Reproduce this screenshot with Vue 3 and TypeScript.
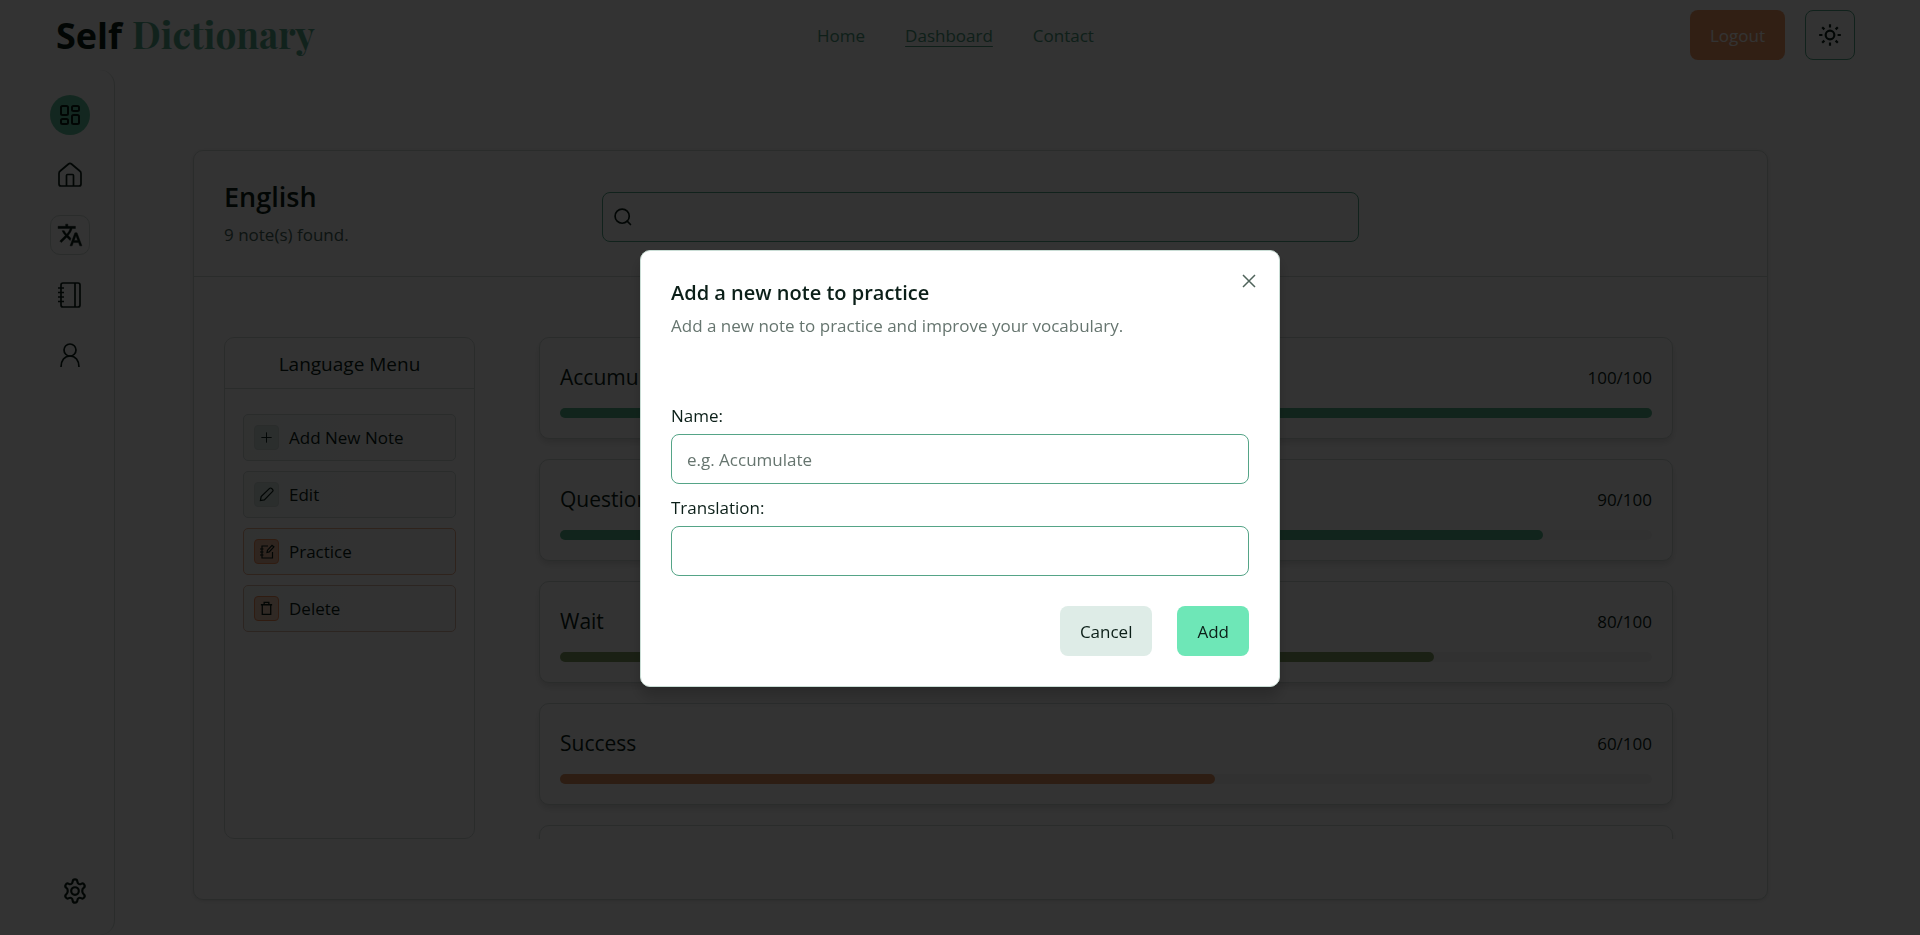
<script setup lang="ts">
import { ref } from 'vue'

interface Note {
  name: string
  score: number
  tone: 'high' | 'good' | 'fair'
}

interface MenuAction {
  label: string
  icon: 'plus' | 'pencil' | 'notebook' | 'trash'
}

const notes: Note[] = [
  { name: 'Accumulate', score: 100, tone: 'high' },
  { name: 'Question', score: 90, tone: 'high' },
  { name: 'Wait', score: 80, tone: 'good' },
  { name: 'Success', score: 60, tone: 'fair' },
]

const actions: MenuAction[] = [
  { label: 'Add New Note', icon: 'plus' },
  { label: 'Edit', icon: 'pencil' },
  { label: 'Practice', icon: 'notebook' },
  { label: 'Delete', icon: 'trash' },
]

const search = ref('')
const noteName = ref('')
const translation = ref('')
</script>

<template>
  <div class="page">
    <header class="topbar">
      <a href="#" class="logo"><span class="logo-self">Self</span><span class="logo-dictionary">Dictionary</span></a>
      <nav class="nav">
        <a href="#">Home</a>
        <a href="#" class="current">Dashboard</a>
        <a href="#">Contact</a>
      </nav>
      <div class="session">
        <button type="button" class="logout">Logout</button>
        <button type="button" class="theme" aria-label="Toggle theme">
          <svg width="26" height="26" viewBox="0 0 24 24" fill="none" stroke="currentColor" stroke-width="2">
            <circle cx="12" cy="12" r="4" />
            <path d="M12 2v3M12 19v3M2 12h3M19 12h3M4.800 4.800l2 2M17.200 17.200l2 2M4.800 19.200l2-2M17.200 6.800l2-2" />
          </svg>
        </button>
      </div>
    </header>

    <div class="workspace">
      <aside class="sidebar">
        <a href="#" class="side-link active" aria-label="Dashboard">
          <svg width="24" height="24" viewBox="0 0 24 24" fill="none" stroke="currentColor" stroke-width="2">
            <rect x="3" y="3" width="7" height="9" rx="1.500" />
            <rect x="14" y="3" width="7" height="5" rx="1.500" />
            <rect x="14" y="12" width="7" height="9" rx="1.500" />
            <rect x="3" y="16" width="7" height="5" rx="1.500" />
          </svg>
        </a>
        <a href="#" class="side-link" aria-label="Home">
          <svg width="26" height="26" viewBox="0 0 26 26" fill="none" stroke="currentColor" stroke-width="1.700" stroke-linejoin="round">
            <path d="M2 22V11.500c0-1 .4-1.900 1.200-2.500l8.300-7c.9-.7 2.100-.7 3 0l8.300 7c.8.6 1.200 1.500 1.200 2.500V22c0 1.200-.8 2-2 2H4c-1.200 0-2-.8-2-2z" />
            <path d="M9.500 24V13.500c0-.6.400-1 1-1h5c.6 0 1 .4 1 1V24" />
          </svg>
        </a>
        <a href="#" class="side-link framed" aria-label="Languages">
          <svg width="26" height="26" viewBox="0 0 24 24" fill="currentColor" stroke="currentColor" stroke-width="0.400">
            <path d="M12.870 15.070l-2.540-2.510.03-.03A17.500 17.500 0 0 0 14.070 6H17V4h-7V2H8v2H1v2h11.170C11.500 7.920 10.440 9.750 9 11.350 8.070 10.320 7.300 9.190 6.690 8h-2c.73 1.630 1.730 3.170 2.980 4.560l-5.090 5.020L4 19l5-5 3.110 3.110.760-2.040zM18.500 10h-2L12 22h2l1.120-3h4.750L21 22h2l-4.500-12zm-2.620 7l1.620-4.330L19.120 17h-3.240z" />
          </svg>
        </a>
        <a href="#" class="side-link" aria-label="Notes">
          <svg width="26" height="26" viewBox="0 0 26 26" fill="none" stroke="currentColor" stroke-width="1.700">
            <rect x="4" y="1" width="19" height="24" rx="2" />
            <path d="M18 1v24M1 6h6M1 10.500h6M1 15h6M1 19.500h6" />
          </svg>
        </a>
        <a href="#" class="side-link" aria-label="Profile">
          <svg width="26" height="26" viewBox="0 0 26 26" fill="none" stroke="currentColor" stroke-width="1.700">
            <circle cx="13" cy="8" r="6" />
            <path d="M4 25c0-6.500 3.500-11 9-11s9 4.500 9 11" />
          </svg>
        </a>
        <a href="#" class="side-link settings" aria-label="Settings">
          <svg width="26" height="26" viewBox="0 0 24 24" fill="none" stroke="currentColor" stroke-width="2" stroke-linejoin="round">
            <circle cx="12" cy="12" r="3.500" />
            <path d="M9.800 3.400c.2-2.900 4.200-2.900 4.400 0 .1 1.900 1.800 2.900 3.500 2 2.500-1.300 4.500 2.100 2.200 3.800-1.600 1.100-1.600 4.500 0 5.600 2.300 1.700.3 5.100-2.200 3.800-1.700-.9-3.400.1-3.500 2-.2 2.900-4.200 2.900-4.400 0-.1-1.900-1.800-2.900-3.500-2-2.500 1.300-4.500-2.100-2.200-3.800 1.600-1.100 1.600-4.500 0-5.600C1.800 7.500 3.800 4.100 6.300 5.400c1.700.9 3.400-.1 3.500-2z" />
          </svg>
        </a>
      </aside>

      <main class="main">
        <section class="card">
          <div class="card-head">
            <div>
              <h1>English</h1>
              <p>9 note(s) found.</p>
            </div>
            <label class="search">
              <svg width="20" height="20" viewBox="0 0 24 24" fill="none" stroke="currentColor" stroke-width="2" stroke-linecap="round">
                <circle cx="11" cy="11" r="8.500" />
                <path d="M21 21l-4-4" />
              </svg>
              <input v-model="search" type="search" aria-label="Search notes" />
            </label>
          </div>

          <div class="card-body">
            <div class="menu">
              <h2>Language Menu</h2>
              <div class="menu-items">
                <button v-for="action in actions" :key="action.icon" type="button" class="menu-item" :class="action.icon">
                  <span class="menu-icon">
                    <svg v-if="action.icon === 'plus'" width="15" height="15" viewBox="0 0 16 16" fill="none" stroke="currentColor">
                      <path d="M8 2.500v11M2.500 8h11" />
                    </svg>
                    <svg v-else-if="action.icon === 'pencil'" width="15" height="15" viewBox="0 0 16 16" fill="none" stroke="currentColor" stroke-width="1.300">
                      <path d="M1.500 14.500l.8-4.200L11 1.700c.8-.8 1.800-.8 2.500-.1l.9.900c.7.700.7 1.700-.1 2.500l-8.600 8.700z" />
                    </svg>
                    <svg v-else-if="action.icon === 'notebook'" width="16" height="16" viewBox="0 0 16 16" fill="none" stroke="currentColor" stroke-width="1.200">
                      <path d="M9 2H3v12h10.500V8M1 5h3.500M1 8h3.500M1 11h3.500M8 8.500l.5-2.300L13 1.300l1.900 1.600-4.700 5z" />
                    </svg>
                    <svg v-else width="15" height="15" viewBox="0 0 16 16" fill="none" stroke="currentColor" stroke-width="1.400">
                      <path d="M2 4h12M3.500 4v10.300h9V4M5.500 4V1.500h5V4" />
                    </svg>
                  </span>
                  {{ action.label }}
                </button>
              </div>
            </div>

            <ul class="notes">
              <li v-for="note in notes" :key="note.name" class="note">
                <div class="note-row">
                  <h3>{{ note.name }}</h3>
                  <span>{{ note.score }}/100</span>
                </div>
                <div class="track">
                  <div class="fill" :class="note.tone" :style="{ width: note.score + '%' }"></div>
                </div>
              </li>
              <li class="note" aria-hidden="true"></li>
            </ul>
          </div>
        </section>
      </main>
    </div>

    <div class="overlay">
      <form class="dialog" role="dialog" aria-modal="true" aria-labelledby="dialog-title" @submit.prevent>
        <button type="button" class="close" aria-label="Close">
          <svg width="20" height="20" viewBox="0 0 20 20" fill="none" stroke="currentColor" stroke-width="1.500">
            <path d="M4 4l12 12M16 4L4 16" />
          </svg>
        </button>
        <h2 id="dialog-title">Add a new note to practice</h2>
        <p>Add a new note to practice and improve your vocabulary.</p>
        <div class="fields">
          <label for="note-name">Name:</label>
          <input id="note-name" v-model="noteName" type="text" placeholder="e.g. Accumulate" />
          <label for="note-translation">Translation:</label>
          <input id="note-translation" v-model="translation" type="text" />
        </div>
        <div class="buttons">
          <button type="button" class="cancel">Cancel</button>
          <button type="submit" class="add">Add</button>
        </div>
      </form>
    </div>
  </div>
</template>

<style>
body {
  margin: 0;
}
</style>

<style scoped>
* {
  box-sizing: border-box;
}

.page {
  display: flex;
  flex-direction: column;
  min-height: 100vh;
  background: #fcfcfc;
  color: #0b1f18;
  font-family: "Open Sans", "Noto Sans", sans-serif;
  font-size: 17px;
  line-height: 25px;
}

h1,
h2,
h3,
p,
ul {
  margin: 0;
  padding: 0;
}

button,
input {
  margin: 0;
  font: inherit;
  color: inherit;
}

a {
  color: inherit;
  text-decoration: none;
}

svg {
  display: block;
  flex: none;
}

.topbar {
  display: grid;
  grid-template-columns: 1fr auto 1fr;
  align-items: center;
  padding: 10px 65px 10px 56px;
}

.logo {
  display: flex;
  align-items: baseline;
  gap: 10px;
  font-weight: 700;
  line-height: 44px;
}

.logo-self {
  font-size: 36px;
}

.logo-dictionary {
  color: #58ab8c;
  font-family: "Playfair Display", "Liberation Serif", serif;
  font-size: 37px;
}

.nav {
  display: flex;
  gap: 40px;
  color: #4b9c7e;
  font-weight: 500;
}

.current {
  text-decoration: underline;
  text-decoration-thickness: 1px;
  text-underline-offset: 4px;
}

.session {
  display: flex;
  justify-content: flex-end;
  gap: 20px;
}

.logout {
  height: 50px;
  padding: 0 20px;
  border: 0;
  border-radius: 8px;
  background: #f59b66;
  color: #fff;
}

.theme {
  display: grid;
  place-items: center;
  width: 50px;
  height: 50px;
  padding: 0;
  border: 1px solid #55a98a;
  border-radius: 8px;
  background: none;
}

.workspace {
  display: flex;
  flex: 1;
}

.sidebar {
  display: flex;
  flex-direction: column;
  align-items: center;
  gap: 20px;
  width: 115px;
  padding: 25px 0 24px 26px;
  border-right: 1px solid #d2dcd8;
  border-radius: 0 15px 15px 0;
}

.side-link {
  display: grid;
  place-items: center;
  width: 40px;
  height: 40px;
}

.active {
  border-radius: 50%;
  background: #62c49e;
}

.framed {
  border: 1px solid #d2dcd8;
  border-radius: 10px;
}

.settings {
  margin: auto 0 0 10px;
}

.main {
  flex: 1;
  min-width: 0;
  padding: 80px 152px 35px 78px;
}

.card {
  border: 1px solid #d2dcd8;
  border-radius: 10px;
  background: #fff;
  box-shadow: 0 1px 3px rgba(0, 0, 0, 0.1);
}

.card-head {
  display: grid;
  grid-template-columns: minmax(0, 1fr) minmax(0, 2fr) minmax(0, 1fr);
  align-items: center;
  padding: 27px 30px;
  border-bottom: 1px solid #d2dcd8;
}

.card-head h1 {
  font-size: 27px;
  font-weight: 600;
  line-height: 38px;
}

.card-head p {
  padding: 6px 0 2px;
  color: #45645a;
}

.search {
  display: flex;
  align-items: center;
  gap: 10px;
  height: 50px;
  margin-top: 7px;
  padding: 0 10px;
  border: 1px solid #55a98a;
  border-radius: 8px;
}

.search input {
  flex: 1;
  min-width: 0;
  border: 0;
  outline: 0;
  background: none;
}

.card-body {
  display: flex;
  height: 622px;
  padding: 60px 30px;
}

.menu {
  width: 251px;
  border: 1px solid #d2dcd8;
  border-radius: 10px;
}

.menu h2 {
  padding: 13px 0 11px;
  border-bottom: 1px solid #d2dcd8;
  font-size: 19px;
  font-weight: 400;
  line-height: 26px;
  text-align: center;
}

.menu-items {
  display: flex;
  flex-direction: column;
  gap: 10px;
  padding: 25px 18px;
}

.menu-item {
  display: flex;
  align-items: center;
  gap: 10px;
  height: 47px;
  padding: 0 10px;
  border: 1px solid #cfdad6;
  border-radius: 5px;
  background: linear-gradient(90deg, #f4f8f6, #fafbfb);
  text-align: left;
}

.menu-icon {
  display: grid;
  place-items: center;
  width: 25px;
  height: 25px;
  border: 1px solid #cfdad6;
  border-radius: 4px;
  background: #d6e5df;
}

.notebook {
  border-color: #e8ad8c;
}

.trash {
  border-color: #dcb8a4;
}

.notebook .menu-icon {
  border-color: #f08c55;
  background: #ecb89c;
}

.trash .menu-icon {
  border-color: #f08c55;
  background: #f0cab6;
}

.notes {
  display: flex;
  flex: 1;
  flex-direction: column;
  gap: 20px;
  min-width: 0;
  padding: 0 64px;
  overflow: hidden;
  list-style: none;
}

.note {
  flex: none;
  min-height: 102px;
  padding: 22px 20px 20px;
  border: 1px solid #d2dcd8;
  border-radius: 10px;
  background: #fff;
  box-shadow: 0 4px 6px rgba(0, 0, 0, 0.12);
}

.note-row {
  display: flex;
  align-items: center;
  justify-content: space-between;
  margin-bottom: 13px;
}

.note-row h3 {
  font-size: 21px;
  font-weight: 400;
  line-height: 35px;
}

.track {
  border-radius: 5px;
  background: #f6f6f6;
}

.fill {
  height: 10px;
  border-radius: 5px;
}

.high {
  background: #55b48c;
}

.good {
  background: #84a066;
}

.fair {
  background: #e0935f;
}

.overlay {
  position: fixed;
  inset: 0;
  display: grid;
  place-items: center;
  padding-top: 2px;
  background: rgba(0, 0, 0, 0.8);
}

.dialog {
  position: relative;
  width: 640px;
  max-width: 100%;
  padding: 30px;
  border: 1px solid #c9ddd5;
  border-radius: 10px;
  background: #fff;
  box-shadow: 0 10px 15px rgba(0, 0, 0, 0.2);
}

.close {
  position: absolute;
  top: 20px;
  right: 20px;
  padding: 0;
  border: 0;
  background: none;
  color: #4f635b;
}

.dialog h2 {
  font-size: 20px;
  font-weight: 600;
  line-height: 24px;
}

.dialog p {
  margin-top: 8px;
  color: #66756f;
}

.fields {
  display: flex;
  flex-direction: column;
  padding: 60px 0 30px;
}

.fields label {
  padding: 5px 0;
  line-height: 26px;
}

.fields input {
  height: 50px;
  padding: 0 15px;
  border: 1px solid #55a487;
  border-radius: 8px;
  outline: 0;
  background: #fff;
}

.fields input + label {
  margin-top: 6px;
}

.fields input::placeholder {
  color: #66756f;
  opacity: 1;
}

.buttons {
  display: flex;
  justify-content: flex-end;
  gap: 25px;
}

.buttons button {
  height: 50px;
  padding: 0 20px;
  border: 0;
  border-radius: 8px;
}

.cancel {
  background: #deece7;
}

.add {
  background: #6ee7b7;
}
</style>
